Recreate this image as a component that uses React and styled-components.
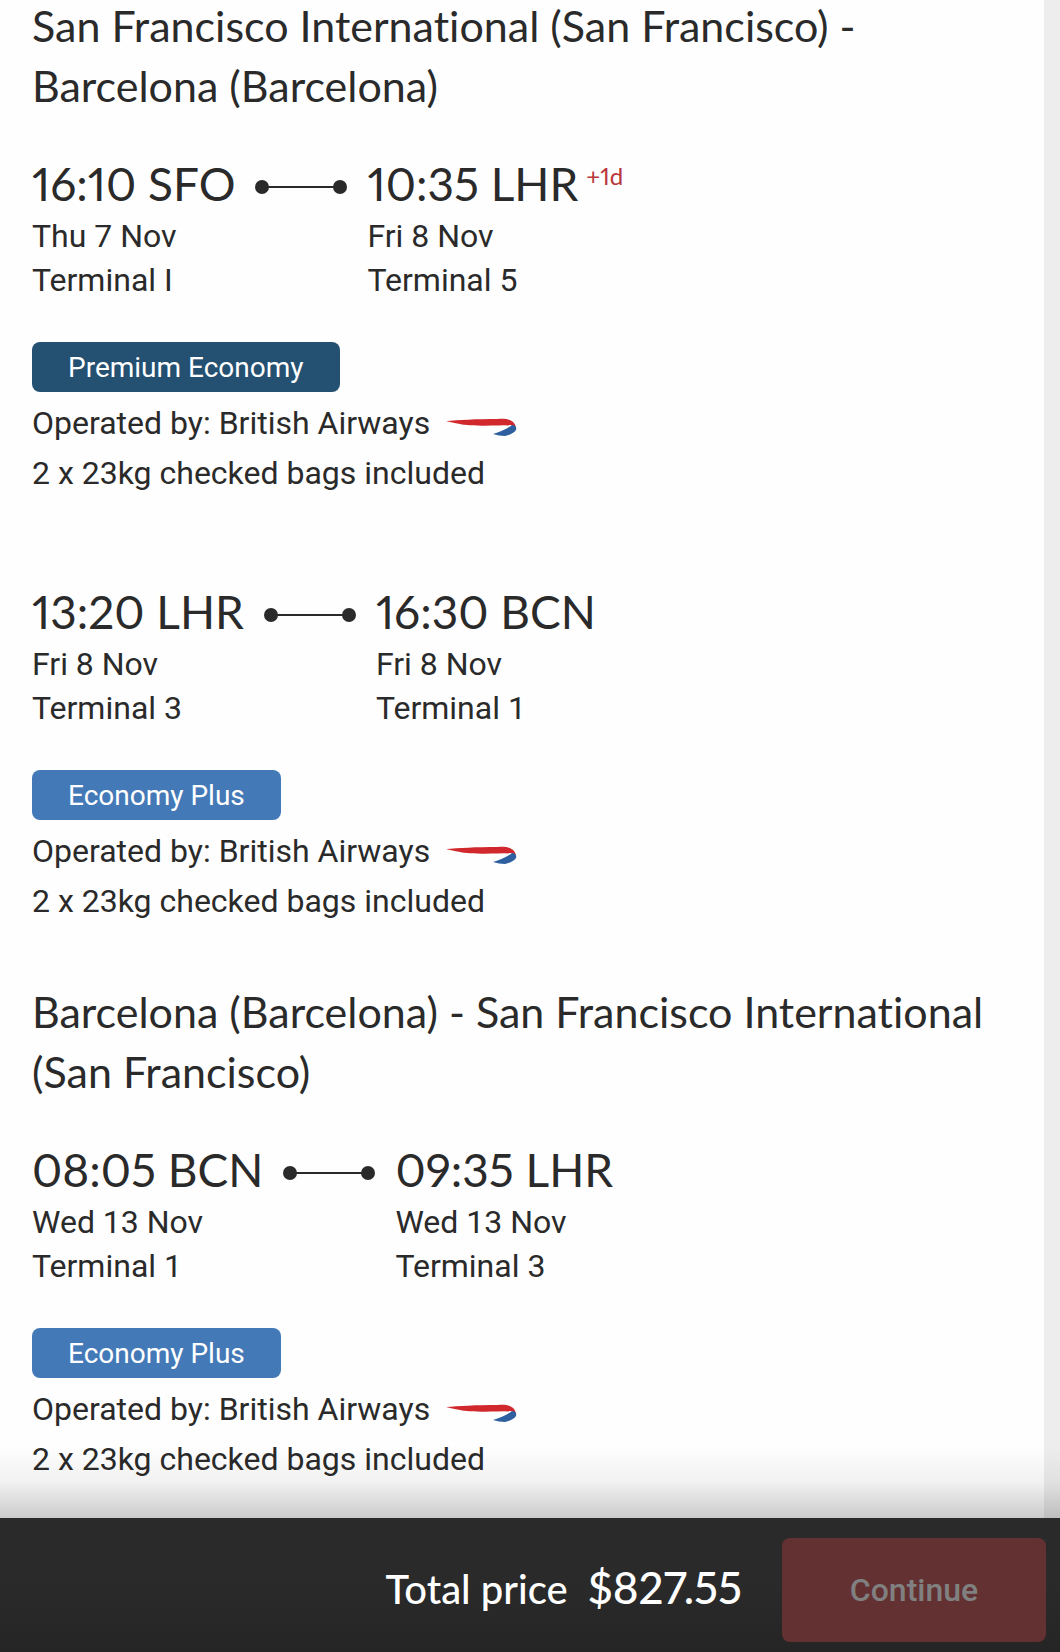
import React from 'react';
import styled, { createGlobalStyle } from 'styled-components';

const GlobalStyle = createGlobalStyle`
  *, *::before, *::after {
    box-sizing: border-box;
  }

  body {
    margin: 0;
    background: #fefefe;
    color: #2a2a2a;
    font-family: Roboto, 'Liberation Sans', sans-serif;
    font-size: 32px;
    font-variant-ligatures: none;
  }
`;

const displayFont = "Lato, 'Open Sans', sans-serif";

const Page = styled.div`
  display: flex;
  flex-direction: column;
  min-height: 100vh;
`;

const Itinerary = styled.main`
  flex: 1;
  padding: 0 32px 16px;
  border-right: 16px solid #ededed;
`;

const Route = styled.h2`
  margin: 0 0 38px;
  font-family: ${displayFont};
  font-size: 43px;
  font-weight: 400;
  line-height: 60px;
`;

const Journey = styled.section`
  margin-top: -4px;

  & + & {
    margin-top: 56px;
  }
`;

const Leg = styled.article`
  & + & {
    margin-top: 84px;
  }
`;

const Stops = styled.div`
  display: flex;
  gap: 20px;
  margin-bottom: 40px;
`;

const Time = styled.div`
  font-family: ${displayFont};
  font-size: 46px;
  font-variant-numeric: proportional-nums;
  line-height: 60px;
  white-space: nowrap;
`;

const DayOffset = styled.sup`
  margin-left: 8px;
  color: #b9373a;
  font-size: 24px;
  line-height: 1;
`;

const StopDetail = styled.div`
  line-height: 44px;
`;

const Connector = styled.svg`
  flex: none;
  width: 92px;
  height: 60px;
  fill: #2a2a2a;
`;

const Cabin = styled.span`
  display: inline-block;
  margin-bottom: 6px;
  padding: 2px 36px 0;
  border-radius: 8px;
  background: ${({ $premium }) => ($premium ? '#245072' : '#4479b8')};
  color: #fff;
  font-size: 28px;
  line-height: 48px;
  vertical-align: top;
`;

const Info = styled.p`
  display: flex;
  align-items: center;
  gap: 16px;
  margin: 0;
  line-height: 50px;
`;

const Footer = styled.footer`
  position: sticky;
  bottom: 0;
  display: flex;
  align-items: center;
  justify-content: flex-end;
  padding: 20px 14px 10px;
  background: linear-gradient(#2a2a2a 50%, #252525);
  color: #fff;
  font-family: ${displayFont};

  &::before {
    content: '';
    position: absolute;
    right: 0;
    bottom: 100%;
    left: 0;
    height: 72px;
    background: linear-gradient(transparent, rgba(0, 0, 0, 0.05) 50%, rgba(0, 0, 0, 0.2));
    pointer-events: none;
  }
`;

const Total = styled.div`
  display: flex;
  align-items: baseline;
  gap: 20px;
  padding-bottom: 6px;
  margin-right: 40px;
  font-size: 40px;
  font-weight: 500;

  strong {
    font-size: 44px;
    font-variant-numeric: proportional-nums;
    font-weight: 500;
  }
`;

const ContinueButton = styled.button`
  width: 264px;
  height: 104px;
  border: 0;
  border-radius: 8px;
  background: #633131;
  color: #808080;
  font-family: Roboto, 'Liberation Sans', sans-serif;
  font-size: 32px;
  font-weight: 500;
`;

const journeys = [
  {
    route: 'San Francisco International (San Francisco) - Barcelona (Barcelona)',
    legs: [
      {
        from: { time: '16:10 SFO', date: 'Thu 7 Nov', terminal: 'Terminal I' },
        to: { time: '10:35 LHR', date: 'Fri 8 Nov', terminal: 'Terminal 5', offset: '+1d' },
        cabin: 'Premium Economy',
      },
      {
        from: { time: '13:20 LHR', date: 'Fri 8 Nov', terminal: 'Terminal 3' },
        to: { time: '16:30 BCN', date: 'Fri 8 Nov', terminal: 'Terminal 1' },
        cabin: 'Economy Plus',
      },
    ],
  },
  {
    route: 'Barcelona (Barcelona) - San Francisco International (San Francisco)',
    legs: [
      {
        from: { time: '08:05 BCN', date: 'Wed 13 Nov', terminal: 'Terminal 1' },
        to: { time: '09:35 LHR', date: 'Wed 13 Nov', terminal: 'Terminal 3' },
        cabin: 'Economy Plus',
      },
    ],
  },
];

const AirlineMark = () => (
  <svg width="72" height="30" viewBox="0 -10 72 30" aria-hidden="true">
    <path
      d="M0 3C12 2 30 1 52 1C64 0 70 4 70 11C69 8 67 7 64 7C44 8 22 8 14 6C8 5 4 4 0 3Z"
      fill="#d0282c"
    />
    <path d="M66 7C69 7 71 9 70 12C68 15 64 17 59 18C55 18 51 17 47 16C54 14 61 11 66 7Z" fill="#2e5f9e" />
  </svg>
);

const Stop = ({ stop }) => (
  <div>
    <Time>
      {stop.time}
      {stop.offset && <DayOffset>{stop.offset}</DayOffset>}
    </Time>
    <StopDetail>{stop.date}</StopDetail>
    <StopDetail>{stop.terminal}</StopDetail>
  </div>
);

const FlightLeg = ({ leg }) => (
  <Leg>
    <Stops>
      <Stop stop={leg.from} />
      <Connector viewBox="0 0 92 60" aria-hidden="true">
        <circle cx="7" cy="33" r="7" />
        <rect x="7" y="32" width="78" height="2" />
        <circle cx="85" cy="33" r="7" />
      </Connector>
      <Stop stop={leg.to} />
    </Stops>
    <Cabin $premium={leg.cabin === 'Premium Economy'}>{leg.cabin}</Cabin>
    <Info>
      Operated by: British Airways
      <AirlineMark />
    </Info>
    <Info>2 x 23kg checked bags included</Info>
  </Leg>
);

const App = () => (
  <>
    <GlobalStyle />
    <Page>
      <Itinerary>
        {journeys.map(journey => (
          <Journey key={journey.route}>
            <Route>{journey.route}</Route>
            {journey.legs.map(leg => (
              <FlightLeg key={leg.from.time} leg={leg} />
            ))}
          </Journey>
        ))}
      </Itinerary>
      <Footer>
        <Total>
          <span>Total price</span>
          <strong>$827.55</strong>
        </Total>
        <ContinueButton type="button" disabled>
          Continue
        </ContinueButton>
      </Footer>
    </Page>
  </>
);

export default App;
